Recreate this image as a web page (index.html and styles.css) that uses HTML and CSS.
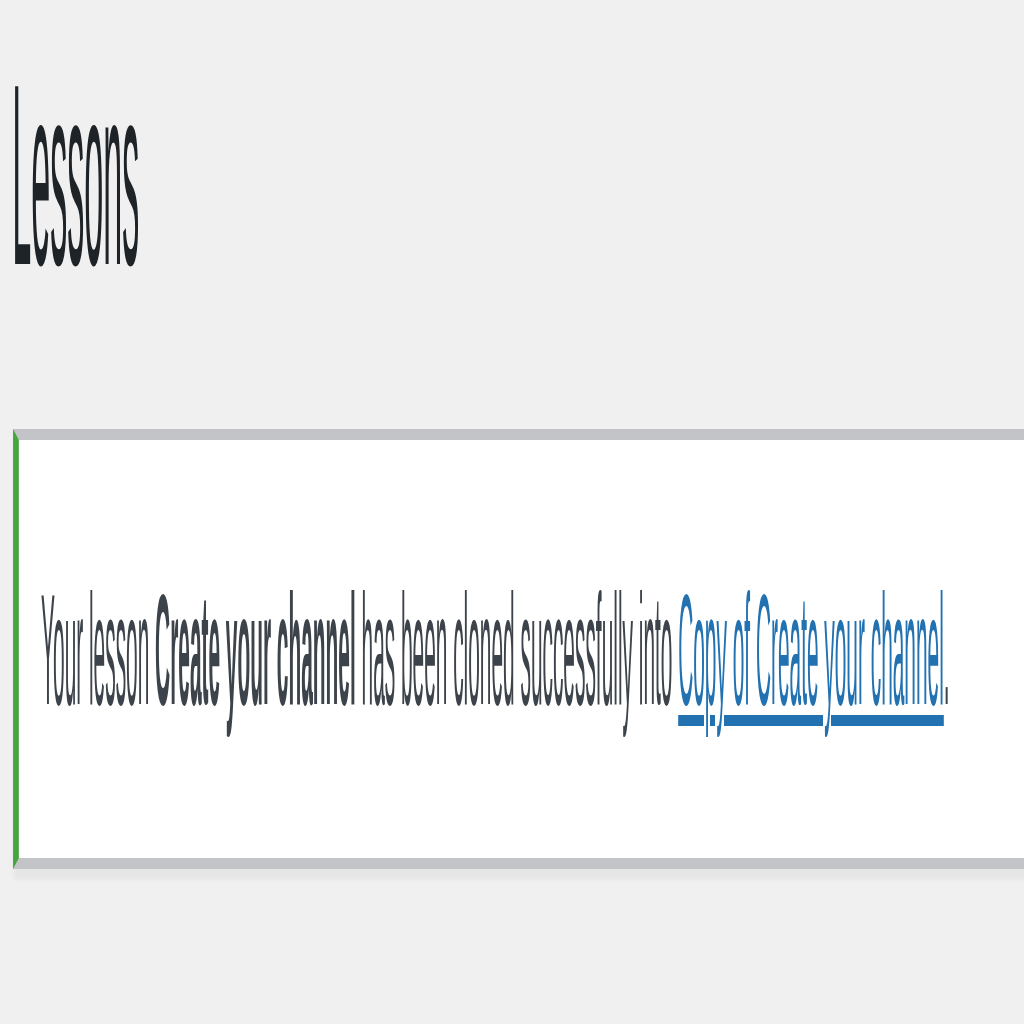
FILE: index.html
```html
<!DOCTYPE html>
<html lang="en">
<head>
  <meta charset="UTF-8">
  <meta name="viewport" content="width=device-width, initial-scale=1.0">
  <title>Lessons</title>
  <link rel="stylesheet" href="styles.css">
</head>
<body>
  <div class="wrap">
    <h1 class="page-title">Lessons</h1>

    <div class="notice notice-success">
      <p>Your lesson <strong>Create your channel</strong> has been cloned successfully into <a href="#">Copy of Create your channel</a>.</p>
    </div>
  </div>
</body>
</html>
```

FILE: styles.css
```css
:root {
  --bg-color: #f0f0f1;
  --heading-color: #1d2327;
  --text-color: #3c434a;
  --link-color: #2271b1;
  --border-color: #c3c4c7;
  --success-color: #46a53e;
}

* {
  box-sizing: border-box;
  margin: 0;
  padding: 0;
}

html,
body {
  overflow: hidden;
}

body {
  background-color: var(--bg-color);
  font-family: "Liberation Sans", Arial, sans-serif;
  color: var(--text-color);
  height: 100vh;
}

/* the capture is stretched: scale the whole admin screen */
.wrap {
  width: 760px;
  transform: scale(1.45, 11);
  transform-origin: 0 0;
}

.page-title {
  font-size: 23.5px;
  font-weight: 400;
  line-height: 29.9px;
  color: var(--heading-color);
  padding: 1.7px 0 0 8.5px;
}

.notice {
  background-color: #fff;
  border: 1px solid var(--border-color);
  border-left-width: 4px;
  box-shadow: 0 1px 1px rgba(0, 0, 0, 0.04);
  margin: 7.5px 0 0 9.3px;
  padding: 9.15px 15px 7.9px;
}

.notice-success {
  border-left-color: var(--success-color);
}

.notice p {
  font-size: 14.4px;
  line-height: 21px;
}

.notice strong {
  font-weight: 700;
}

.notice a {
  color: var(--link-color);
  text-decoration: underline;
}
```
